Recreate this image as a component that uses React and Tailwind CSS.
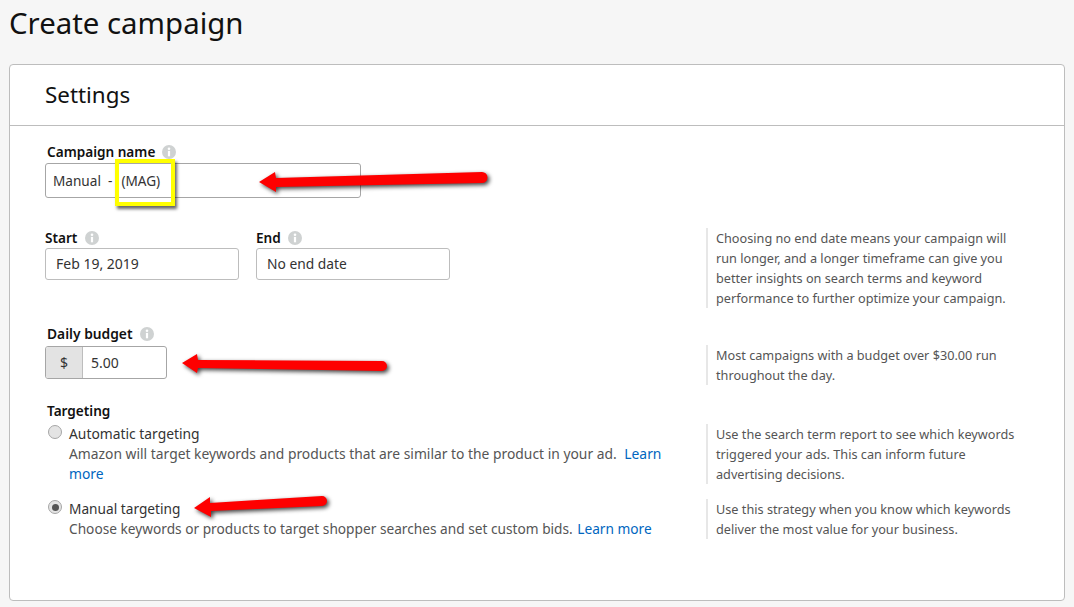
const Info = () => (
  <svg width="14" height="14" viewBox="0 0 14 14" className="shrink-0">
    <circle cx="7" cy="7" r="7" fill="#cfd2d2" />
    <circle cx="7" cy="3.7" r="1.3" fill="#fff" />
    <rect x="5.9" y="5.9" width="2.2" height="5.4" fill="#fff" />
  </svg>
);

const Label = ({ children, info = true, className = "text-[13.6px] gap-[7px]" }) => (
  <div className={`flex items-center h-5 font-semibold text-[#111] ${className}`}>
    <span>{children}</span>
    {info && <Info />}
  </div>
);

const Help = ({ children, className = "" }) => (
  <div className={`w-[316px] border-l-2 border-[#e7e7e7] pl-2 text-[12.7px] leading-5 text-[#555] ${className}`}>
    {children}
  </div>
);

const Arrow = ({ className, width, height, d }) => (
  <svg
    width={width}
    height={height}
    viewBox={`0 0 ${width} ${height}`}
    className={`absolute drop-shadow-[2px_2px_2px_rgba(0,0,0,0.75)] ${className}`}
  >
    <path d={d} fill="#fe0000" />
  </svg>
);

export default function App() {
  return (
    <div className="relative w-[1074px] h-[607px] overflow-hidden bg-[#f6f6f6] font-['Noto_Sans',sans-serif] text-[#111]">
      <h1 className="pl-[9px] pt-[3px] h-[64px] text-[29.4px] leading-10 font-normal text-[#111]">Create campaign</h1>
      <div className="ml-[9px] w-[1056px] h-[537px] bg-white border border-[#bdbdbd] rounded-[4px]">
        <div className="h-[61px] border-b border-[#bdbdbd] pl-[35px] pt-[14px] text-[22.4px] leading-8 text-[#111]">Settings</div>
        <div className="pl-[35px] pt-[16px]">
          <Label className="ml-[2px] text-[13.6px] gap-[7px]">Campaign name</Label>
          <div className="mt-[1px] w-[316px] h-[35px] border border-[#a6a6a6] rounded-[3px] pl-[7px] pt-[1px] flex items-center text-[13.6px] text-[#333] whitespace-pre">Manual  -  <span className="ml-[2px]">(MAG)</span></div>

          <div className="mt-[30px] flex h-[80px]">
            <div className="w-[661px] flex gap-[17px]">
              <div>
                <Label className="text-[13.6px] gap-[8px]">Start</Label>
                <div className="w-[194px] h-[32px] border border-[#bdbdbd] rounded-[3px] pl-[10px] pb-[1px] flex items-center text-[14px] text-[#333]">Feb 19, 2019</div>
              </div>
              <div>
                <Label className="text-[13.6px] gap-[7px]">End</Label>
                <div className="w-[194px] h-[32px] border border-[#bdbdbd] rounded-[3px] pl-[10px] pt-[1px] flex items-center text-[13.8px] text-[#333]">No end date</div>
              </div>
            </div>
            <Help>Choosing no end date means your campaign will run longer, and a longer timeframe can give you better insights on search terms and keyword performance to further optimize your campaign.</Help>
          </div>

          <div className="mt-[16px] flex h-[61px]">
            <div className="w-[661px]">
              <Label className="ml-[2px] text-[13.8px] gap-[7px]">Daily budget</Label>
              <div className="mt-[2px] w-[122px] h-[33px] border border-[#a6a6a6] rounded-[3px] flex overflow-hidden text-[14px] text-[#333]">
                <div className="w-[37px] bg-[#e3e3e3] border-r border-[#bdbdbd] flex items-center justify-center">$</div>
                <div className="pl-[8px] pb-[1px] flex items-center">5.00</div>
              </div>
            </div>
            <Help className="mt-[21px] h-[40px]">Most campaigns with a budget over $30.00 run throughout the day.</Help>
          </div>

          <Label info={false} className="mt-[15px] mb-[2px] ml-[2px] h-[22px] text-[13.6px]">Targeting</Label>

          <div className="flex h-[75px]">
            <div className="w-[661px] flex">
              <div className="ml-[3px] mt-[1px] w-[14px] h-[14px] rounded-full border border-[#a6a6a6] bg-[#e4e4e4] shrink-0" />
              <div className="ml-[7px] w-[597px] text-[13.85px] leading-5 text-[#555]">
                <div className="text-[#333]">Automatic targeting</div>
                <div>Amazon will target keywords and products that are similar to the product in your ad. <span className="ml-[4px] text-[#0066c0]">Learn</span> <span className="text-[#0066c0]">more</span></div>
              </div>
            </div>
            <Help className="h-[60px]">Use the search term report to see which keywords triggered your ads. This can inform future advertising decisions.</Help>
          </div>

          <div className="flex">
            <div className="w-[661px] flex">
              <div className="ml-[3px] mt-[1px] w-[14px] h-[14px] rounded-full border border-[#a6a6a6] bg-[#e4e4e4] shrink-0 flex items-center justify-center">
                <div className="w-[7px] h-[7px] rounded-full bg-[#555]" />
              </div>
              <div className="ml-[7px] w-[597px] text-[13.7px] leading-5 text-[#555]">
                <div className="text-[#333]">Manual targeting</div>
                <div>Choose keywords or products to target shopper searches and set custom bids. <span className="ml-[1px] text-[#0066c0]">Learn more</span></div>
              </div>
            </div>
            <Help className="h-[40px]">Use this strategy when you know which keywords deliver the most value for your business.</Help>
          </div>
        </div>
      </div>

      <div className="absolute left-[115px] top-[159px] w-[60px] h-[47px] border-[4px] border-[#ffff00] shadow-[2px_3px_3px_rgba(0,0,0,0.6)]" />
      <Arrow className="left-[255px] top-[165px]" width="240" height="34"
        d="M4 17 L20 7 L21 13 L227 7 A5.5 5.5 0 0 1 227 18 L21 22 L21 27 Z" />
      <Arrow className="left-[178px] top-[348px]" width="218" height="34"
        d="M4 15 L19 6 L20 12 L204 13 A5 5 0 0 1 204 23 L20 20 L19 25 Z" />
      <Arrow className="left-[191px] top-[490px]" width="144" height="34"
        d="M3 18 L19 7 L19 13 L131 6 A5 5 0 0 1 131 16 L20 21 L20 27 Z" />
    </div>
  );
}
